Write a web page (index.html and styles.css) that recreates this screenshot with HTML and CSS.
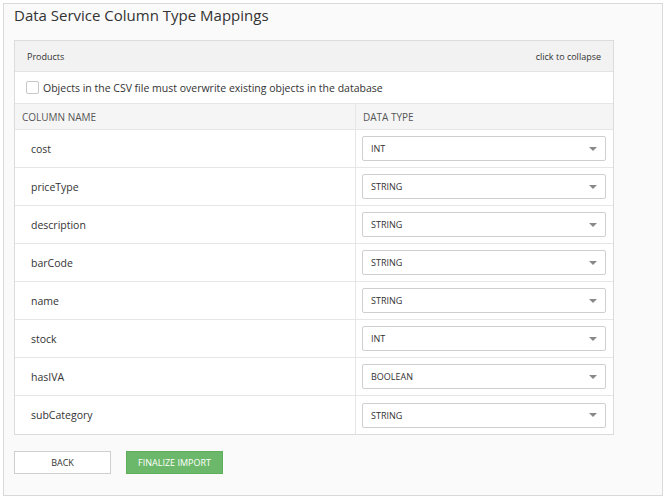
FILE: index.html
```html
<!DOCTYPE html>
<html>
<head>
<meta charset="utf-8">
<link rel="stylesheet" href="styles.css">
</head>
<body>
<div class="page">
  <h1 class="title">Data Service Column Type Mappings</h1>
  <div class="panel">
    <div class="panel-head">
      <span>Products</span>
      <span>click to collapse</span>
    </div>
    <label class="check-row">
      <span class="checkbox"></span>
      <span>Objects in the CSV file must overwrite existing objects in the database</span>
    </label>
    <div class="grid">
      <div class="th">COLUMN NAME</div>
      <div class="th th-right">DATA TYPE</div>

      <div class="td">cost</div>
      <div class="td td-right"><div class="select"><span>INT</span><span class="arrow"></span></div></div>

      <div class="td">priceType</div>
      <div class="td td-right"><div class="select"><span>STRING</span><span class="arrow"></span></div></div>

      <div class="td">description</div>
      <div class="td td-right"><div class="select"><span>STRING</span><span class="arrow"></span></div></div>

      <div class="td">barCode</div>
      <div class="td td-right"><div class="select"><span>STRING</span><span class="arrow"></span></div></div>

      <div class="td">name</div>
      <div class="td td-right"><div class="select"><span>STRING</span><span class="arrow"></span></div></div>

      <div class="td">stock</div>
      <div class="td td-right"><div class="select"><span>INT</span><span class="arrow"></span></div></div>

      <div class="td">hasIVA</div>
      <div class="td td-right"><div class="select"><span>BOOLEAN</span><span class="arrow"></span></div></div>

      <div class="td last">subCategory</div>
      <div class="td td-right last"><div class="select"><span>STRING</span><span class="arrow"></span></div></div>
    </div>
  </div>
  <div class="actions">
    <button class="btn btn-back">BACK</button>
    <button class="btn btn-go">FINALIZE IMPORT</button>
  </div>
</div>
</body>
</html>
```
FILE: styles.css
```css
* { box-sizing: border-box; }
html, body { margin: 0; padding: 0; background: #fff; }
body {
  font-family: "Open Sans", "DejaVu Sans", sans-serif;
  color: #333;
  padding: 3px 4px 3px 3px;
}
.page {
  background: #fafafa;
  border: 1px solid #d9d9d9;
  height: 493px;
  padding: 0 0 0 10px;
}
.title {
  margin: 0;
  font-weight: 400;
  font-size: 15px;
  line-height: 22px;
  padding-top: 0;
  color: #333;
}
.panel {
  margin-top: 14px;
  width: 600px;
  border: 1px solid #dcdcdc;
  background: #fff;
}
.panel-head {
  height: 31px;
  background: #f2f2f2;
  border-bottom: 1px solid #e4e4e4;
  display: flex;
  justify-content: space-between;
  align-items: center;
  padding: 0 12px 0 12px;
  font-size: 9px;
  color: #333;
}
.check-row {
  height: 32px;
  display: flex;
  align-items: center;
  padding-left: 11px;
  font-size: 10.5px;
  color: #333;
  border-bottom: 1px solid #e6e6e6;
}
.checkbox {
  width: 13px;
  height: 13px;
  border: 1px solid #c8c8c8;
  border-radius: 2px;
  background: #fff;
  margin-right: 4px;
}
.grid {
  display: grid;
  grid-template-columns: 340px 1fr;
}
.th {
  height: 26px;
  background: #f5f5f5;
  display: flex;
  align-items: center;
  padding-left: 7px;
  font-size: 10px;
  color: #555;
  border-bottom: 1px solid #e6e6e6;
}
.th-right, .td-right { border-left: 1px solid #e6e6e6; }
.td {
  height: 38px;
  display: flex;
  align-items: center;
  padding-left: 16px;
  font-size: 10.5px;
  color: #333;
  border-bottom: 1px solid #e6e6e6;
}
.td.last { border-bottom: none; }
.td-right { padding: 0 7px 0 6px; }
.select {
  flex: 1;
  height: 25px;
  border: 1px solid #cfcfcf;
  border-radius: 2px;
  background: #fff;
  display: flex;
  align-items: center;
  justify-content: space-between;
  padding: 0 8px 0 8px;
  font-size: 9px;
  color: #333;
}
.arrow {
  width: 0;
  height: 0;
  border-left: 4px solid transparent;
  border-right: 4px solid transparent;
  border-top: 4px solid #888;
}
.actions {
  margin-top: 16px;
  display: flex;
  gap: 15px;
}
.btn {
  font-family: "Open Sans", "DejaVu Sans", sans-serif;
  font-size: 9px;
  height: 23px;
  padding: 0;
  border-radius: 0;
}
.btn-back {
  width: 97px;
  background: #fff;
  border: 1px solid #cfcfcf;
  color: #333;
}
.btn-go {
  width: 97px;
  background: #6cb86a;
  border: 1px solid #5fae5c;
  color: #fff;
}
```
